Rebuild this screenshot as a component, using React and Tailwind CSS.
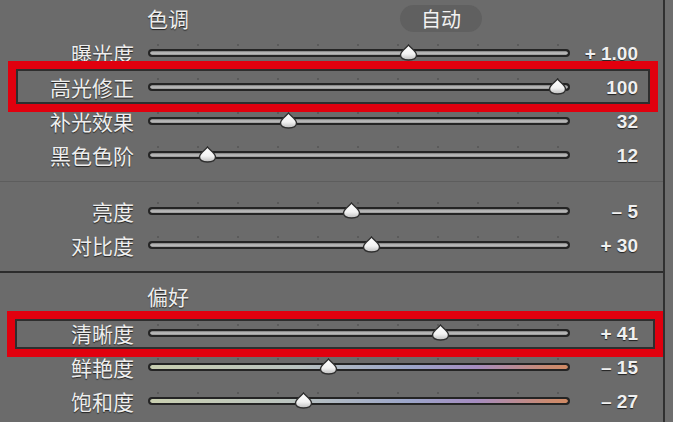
import React from "react";

const cjk = { fontFamily: '"Noto Sans CJK SC", "Noto Sans", sans-serif' };
const num = { fontFamily: '"Liberation Sans", Arial, sans-serif' };

const plain = "bg-gradient-to-b from-[#7a7a7a] via-[#c2c2c2] to-[#949494]";
const colored =
  "bg-[linear-gradient(to_right,#c9cfb0_0%,#b9c2bf_35%,#9ba5c9_62%,#a58cc0_78%,#c98a72_95%,#d08a64_100%)]";

function Thumb() {
  return (
    <svg width="19" height="17" viewBox="0 0 19 17">
      <defs>
        <linearGradient id="tg" x1="0" y1="0" x2="0" y2="1">
          <stop offset="0" stopColor="#ffffff" />
          <stop offset="0.6" stopColor="#f2f2f2" />
          <stop offset="1" stopColor="#bdbdbd" />
        </linearGradient>
      </defs>
      <path
        d="M9.5 1 C11 3.5 17.5 7 17.5 11 C17.5 14 14.5 16 9.5 16 C4.5 16 1.5 14 1.5 11 C1.5 7 8 3.5 9.5 1 Z"
        fill="url(#tg)"
        stroke="#2e2e2e"
        strokeWidth="1.4"
      />
    </svg>
  );
}

function Slider({ pos, tone }) {
  return (
    <div className="relative w-[422px] h-[34px] ml-[14px] flex items-center">
      <div className="absolute left-[9px] right-[11px] top-[8px] flex justify-between">
        {Array.from({ length: 11 }).map((_, i) => (
          <span key={i} className="w-[2px] h-[2px] rounded-full bg-[#545454]" />
        ))}
      </div>
      <div className="w-full h-[8px] rounded-full border-2 border-[#242424] bg-[#242424] overflow-hidden">
        <div className={`h-full rounded-full ${tone === "color" ? colored : plain}`} />
      </div>
      <div className="absolute top-[8px]" style={{ left: pos - 9 }}>
        <Thumb />
      </div>
    </div>
  );
}

function Row({ label, value, pos, tone, box }) {
  return (
    <div className="relative flex items-center h-[34px]">
      <div
        className="w-[134px] text-right text-[21px] leading-none text-[#eeeeee] [text-shadow:0_1px_1px_rgba(0,0,0,0.7)]"
        style={cjk}
      >
        {label}
      </div>
      <Slider pos={pos} tone={tone} />
      <div
        className="w-[68px] text-right text-[19px] font-bold leading-none text-[#f0f0f0] [text-shadow:0_1px_1px_rgba(0,0,0,0.7)]"
        style={num}
      >
        {value}
      </div>
      {box === 1 && (
        <div className="absolute z-10 left-[8px] top-[-9px] w-[650px] h-[51px] border-[8px] border-[#e1000e]">
          <div className="w-full h-full border-2 border-[#2e2e2e]" />
        </div>
      )}
      {box === 2 && (
        <div className="absolute z-10 left-[7px] top-[-5px] w-[656px] h-[46px] border-[8px] border-[#e1000e]">
          <div className="w-full h-full border-2 border-[#2e2e2e]" />
        </div>
      )}
    </div>
  );
}

function Header({ title, auto }) {
  return (
    <div className="flex items-center">
      <div className="w-[147px]" />
      <div
        className="w-[253px] text-[21px] leading-none text-[#eeeeee] [text-shadow:0_1px_1px_rgba(0,0,0,0.7)]"
        style={cjk}
      >
        {title}
      </div>
      {auto && (
        <div
          className="w-[82px] h-[27px] rounded-full bg-[#606060] flex items-center justify-center text-[20px] leading-none text-[#f2f2f2]"
          style={cjk}
        >
          自动
        </div>
      )}
    </div>
  );
}

export default function App() {
  return (
    <div className="w-[673px] h-[422px] overflow-hidden flex bg-[#6b6b6b]">
      <div className="w-[663px] flex flex-col">
        <div className="h-[36px] pt-[5px]">
          <Header title="色调" auto />
        </div>
        <Row label="曝光度" value="+ 1.00" pos={260} />
        <Row label="高光修正" value="100" pos={409} box={1} />
        <Row label="补光效果" value="32" pos={140} />
        <Row label="黑色色阶" value="12" pos={59} />
        <div className="h-[9px]" />
        <div className="h-px bg-[#5d5d5d]" />
        <div className="h-[12px]" />
        <Row label="亮度" value="– 5" pos={203} />
        <Row label="对比度" value="+ 30" pos={223} />
        <div className="h-[9px]" />
        <div className="h-[2px] bg-[#2c2c2c]" />
        <div className="h-[43px] flex items-center pt-[4px]">
          <Header title="偏好" />
        </div>
        <Row label="清晰度" value="+ 41" pos={292} box={2} />
        <Row label="鲜艳度" value="– 15" pos={180} tone="color" />
        <Row label="饱和度" value="– 27" pos={155} tone="color" />
      </div>
      <div className="w-[2px] bg-[#303030]" />
      <div className="flex-1 bg-[#6e6e6e]" />
    </div>
  );
}
